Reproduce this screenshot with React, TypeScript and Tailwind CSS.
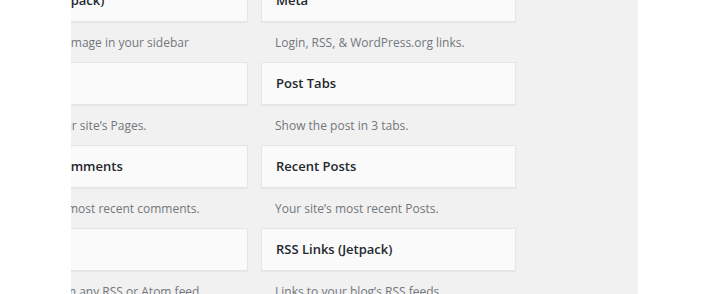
const LEFT = [
  { title: "Image (Jetpack)", desc: "Display an image in your sidebar" },
  { title: "Pages", desc: "A list of your site’s Pages." },
  { title: "Recent Comments", desc: "Your site’s most recent comments." },
  { title: "RSS", desc: "Entries from any RSS or Atom feed." },
];

const RIGHT = [
  { title: "Meta", desc: "Login, RSS, & WordPress.org links." },
  { title: "Post Tabs", desc: "Show the post in 3 tabs." },
  { title: "Recent Posts", desc: "Your site’s most recent Posts." },
  { title: "RSS Links (Jetpack)", desc: "Links to your blog’s RSS feeds." },
];

function Widget({ title, desc }: { title: string; desc: string }) {
  return (
    <div className="flex flex-col">
      <div className="h-[43px] flex items-center px-[14px] bg-[#fafafa] border border-[#e5e5e5] shadow-[0_1px_1px_rgba(0,0,0,0.04)] text-[13px] font-semibold text-[#23282d] whitespace-nowrap">
        {title}
      </div>
      <div className="h-[40px] flex items-center pl-[14px] pt-[2px] text-[12px] text-[#72777c] whitespace-nowrap">
        {desc}
      </div>
    </div>
  );
}

export default function App() {
  return (
    <div
      className="w-[710px] h-[294px] flex overflow-hidden bg-white"
      style={{ fontFamily: '"Open Sans", "Noto Sans", sans-serif' }}
    >
      <div className="w-[71px] shrink-0 bg-white" />
      <main className="w-[567px] shrink-0 bg-[#f1f1f1] overflow-hidden">
        <div className="flex gap-[13px] -ml-[78px] -mt-[21px]">
          {/* colonne gauche, coupée par le bord */}
          <div className="w-[255px] shrink-0 flex flex-col">
            {LEFT.map((w) => (
              <Widget key={w.title} {...w} />
            ))}
          </div>
          {/* colonne droite */}
          <div className="w-[255px] shrink-0 flex flex-col">
            {RIGHT.map((w) => (
              <Widget key={w.title} {...w} />
            ))}
          </div>
        </div>
      </main>
      <div className="flex-1 bg-white" />
    </div>
  );
}
